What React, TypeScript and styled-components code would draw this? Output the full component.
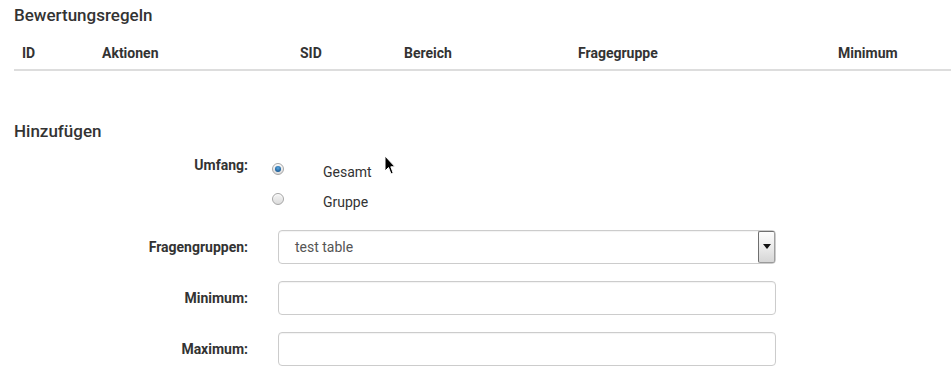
import React from 'react'
import styled, { createGlobalStyle } from 'styled-components'

const GlobalStyle = createGlobalStyle`
  body {
    margin: 0;
    background: #fff;
    font-family: Roboto, 'Liberation Sans', sans-serif;
    font-size: 14px;
    line-height: 20px;
    color: #333;
  }
`

const columns = [
  { title: 'ID', width: 80 },
  { title: 'Aktionen', width: 198 },
  { title: 'SID', width: 104 },
  { title: 'Bereich', width: 174 },
  { title: 'Fragegruppe', width: 260 },
  { title: 'Minimum' },
]

export const App = () => {
  return (
    <Page>
      <GlobalStyle />
      <SectionTitle>Bewertungsregeln</SectionTitle>
      <RulesTable>
        <thead>
          <tr>
            {columns.map((c) => (
              <HeadCell key={c.title} $width={c.width}>
                {c.title}
              </HeadCell>
            ))}
          </tr>
        </thead>
      </RulesTable>

      <SectionTitle $gap={49}>Hinzufügen</SectionTitle>
      <AddForm>
        <FormRow $top>
          <Label>Umfang:</Label>
          <RadioGroup>
            <RadioRow>
              <Radio $checked />
              Gesamt
            </RadioRow>
            <RadioRow>
              <Radio />
              Gruppe
            </RadioRow>
          </RadioGroup>
        </FormRow>
        <FormRow>
          <Label>Fragengruppen:</Label>
          <SelectBox>
            <SelectValue>test table</SelectValue>
            <DropButton>
              <svg width='8' height='5' viewBox='0 0 8 5'>
                <path d='M0 0 H8 L4 5 Z' fill='#111' />
              </svg>
            </DropButton>
          </SelectBox>
        </FormRow>
        <FormRow>
          <Label>Minimum:</Label>
          <TextInput type='text' />
        </FormRow>
        <FormRow>
          <Label>Maximum:</Label>
          <TextInput type='text' />
        </FormRow>
      </AddForm>

      <Cursor width='12' height='21' viewBox='0 0 12 21'>
        <path
          d='M1 1 L1 16 L4.5 12.5 L7 19 L9.2 18 L6.8 11.8 L11 11.8 Z'
          fill='#000'
          stroke='#fff'
          strokeWidth='1'
          strokeLinejoin='round'
        />
      </Cursor>
    </Page>
  )
}

const Page = styled.div`
  position: relative;
  padding: 4px 0 12px 14px;
  overflow: hidden;
`

const SectionTitle = styled.h3<{ $gap?: number }>`
  margin: ${(p) => p.$gap || 0}px 0 0;
  font-size: 17px;
  line-height: 22px;
  font-weight: 500;
  color: #333;
`

const RulesTable = styled.table`
  margin-top: 8px;
  width: 937px;
  border-collapse: collapse;
  table-layout: fixed;
`

const HeadCell = styled.th<{ $width?: number }>`
  box-sizing: border-box;
  width: ${(p) => (p.$width ? `${p.$width}px` : 'auto')};
  padding: 9px 8px 6px;
  text-align: left;
  font-size: 14px;
  font-weight: 700;
  line-height: 20px;
  color: #333;
  white-space: nowrap;
  border-bottom: 2px solid #ddd;
`

const AddForm = styled.form`
  display: flex;
  flex-direction: column;
  gap: 17px;
  margin-top: 13px;
  width: 762px;
`

const FormRow = styled.div<{ $top?: boolean }>`
  display: grid;
  grid-template-columns: 234px 498px;
  column-gap: 30px;
  align-items: ${(p) => (p.$top ? 'start' : 'center')};
  margin-bottom: ${(p) => (p.$top ? '1px' : '0')};
`

const Label = styled.label`
  text-align: right;
  font-weight: 700;
  font-size: 14px;
  line-height: 20px;
  color: #333;
`

const RadioGroup = styled.div`
  display: flex;
  flex-direction: column;
  gap: 10px;
  padding-top: 7px;
`

const RadioRow = styled.div`
  display: flex;
  align-items: flex-start;
  font-size: 14px;
  line-height: 20px;
  color: #333;
`

const Radio = styled.span<{ $checked?: boolean }>`
  position: relative;
  box-sizing: border-box;
  width: 12px;
  height: 12px;
  margin: 1px 39px 0 -6px;
  border-radius: 50%;
  border: 1px solid #a6a6a6;
  background: linear-gradient(#f4f4f4, #dcdcdc);
  box-shadow: inset 0 1px 1px rgba(255, 255, 255, 0.9);
  flex-shrink: 0;

  &::after {
    content: '';
    display: ${(p) => (p.$checked ? 'block' : 'none')};
    position: absolute;
    left: 2px;
    top: 2px;
    width: 6px;
    height: 6px;
    border-radius: 50%;
    background: radial-gradient(circle at 50% 35%, #5aa7e0, #1d5f99 70%, #16466f);
  }
`

const SelectBox = styled.div`
  display: flex;
  align-items: stretch;
  box-sizing: border-box;
  height: 34px;
  border: 1px solid #ccc;
  border-radius: 4px;
  background: #fff;
  box-shadow: inset 0 1px 1px rgba(0, 0, 0, 0.05);
`

const SelectValue = styled.span`
  flex: 1;
  display: flex;
  align-items: center;
  padding-left: 16px;
  font-size: 14px;
  color: #555;
`

const DropButton = styled.span`
  display: flex;
  align-items: center;
  justify-content: center;
  box-sizing: border-box;
  width: 17px;
  border: 1px solid #6f6f6f;
  border-right-color: #a0a0a0;
  border-bottom-color: #9a9a9a;
  border-radius: 2px;
  background: linear-gradient(#fdfdfd, #e9e9e9 55%, #d6d6d6);
  padding-bottom: 1px;
`

const TextInput = styled.input`
  box-sizing: border-box;
  height: 34px;
  width: 100%;
  padding: 6px 12px;
  border: 1px solid #ccc;
  border-radius: 4px;
  background: #fff;
  box-shadow: inset 0 1px 1px rgba(0, 0, 0, 0.05);
  font-family: Roboto, 'Liberation Sans', sans-serif;
  font-size: 14px;
  outline: none;
`

const Cursor = styled.svg`
  position: absolute;
  left: 384px;
  top: 155px;
  pointer-events: none;
`

export default App
